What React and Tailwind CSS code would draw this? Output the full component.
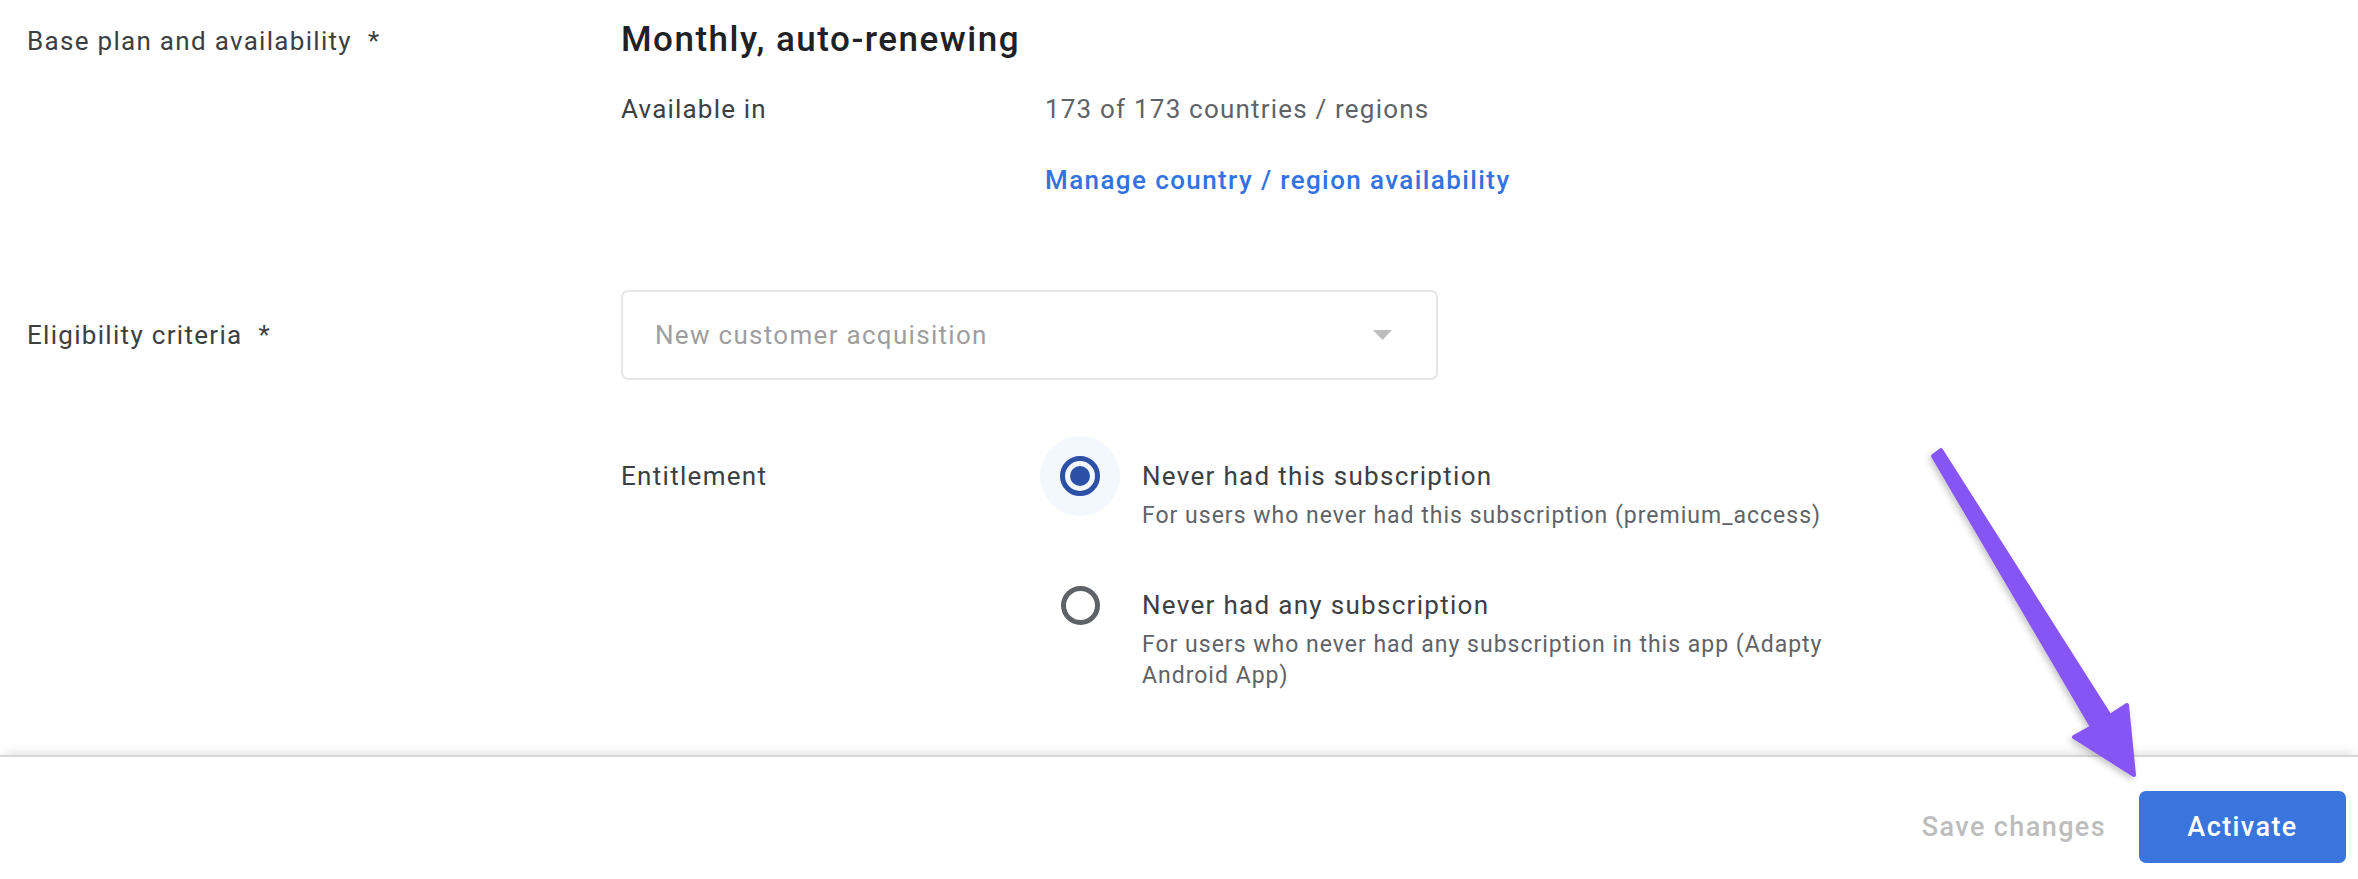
import { useState } from 'react'

const font = { fontFamily: 'Roboto, "Noto Sans", Arial, sans-serif' }

const options = [
  {
    id: 'this',
    title: 'Never had this subscription',
    desc: 'For users who never had this subscription (premium_access)',
  },
  {
    id: 'any',
    title: 'Never had any subscription',
    desc: 'For users who never had any subscription in this app (Adapty Android App)',
  },
]

const Radio = ({ checked }) => (
  <div
    className={
      'w-[80px] h-[80px] shrink-0 rounded-full flex items-center justify-center ' +
      (checked ? 'bg-[#f3f7fe]' : '')
    }
  >
    {checked ? (
      <div className="w-[40px] h-[40px] rounded-full border-[5px] border-[#2b50a5] flex items-center justify-center">
        <div className="w-[20px] h-[20px] rounded-full bg-[#2b50a5]"></div>
      </div>
    ) : (
      <div className="w-[39px] h-[39px] rounded-full border-[5px] border-[#5f6368]"></div>
    )}
  </div>
)

const Arrow = () => (
  <svg
    className="absolute inset-0 pointer-events-none"
    width="2358"
    height="879"
    viewBox="0 0 2358 879"
  >
    <defs>
      <filter id="arrowShadow" x="-20%" y="-20%" width="140%" height="140%">
        <feDropShadow dx="-2" dy="3" stdDeviation="3" floodColor="#000" floodOpacity="0.22" />
      </filter>
    </defs>
    <path
      d="M1933 456 L1941 450 L2110 716 L2127 705 L2134 775 L2074 737 L2092 727 Z"
      fill="#8655f4"
      stroke="#8655f4"
      strokeWidth="4"
      strokeLinejoin="round"
      filter="url(#arrowShadow)"
    />
  </svg>
)

export default function App() {
  const [selected, setSelected] = useState('this')

  return (
    <div className="relative w-full h-[879px] bg-white flex flex-col overflow-hidden" style={font}>
      <div className="flex-1 pl-[27px] pt-[20px]">
        {/* Base plan */}
        <div className="flex items-start">
          <div className="w-[594px] shrink-0 text-[26px] tracking-[1.3px] leading-[40px] text-[#3c4043] pt-[1px]">
            Base plan and availability<span className="ml-[16px]">*</span>
          </div>
          <div className="flex flex-col">
            <h2 className="text-[35px] tracking-[1.5px] leading-[40px] font-medium text-[#202124]">
              Monthly, auto-renewing
            </h2>
            <div className="flex mt-[31px] text-[26px] tracking-[1.2px] leading-[36px]">
              <div className="w-[424px] shrink-0 text-[#3c4043]">Available in</div>
              <div className="text-[#5f6368]">173 of 173 countries / regions</div>
            </div>
            <div className="flex mt-[35px] text-[26px] tracking-[1.4px] leading-[36px]">
              <div className="w-[424px] shrink-0"></div>
              <a className="text-[#3273e1] font-medium cursor-pointer">
                Manage country / region availability
              </a>
            </div>
          </div>
        </div>

        {/* Eligibility */}
        <div className="flex items-center mt-[92px]">
          <div className="w-[594px] shrink-0 text-[26px] tracking-[1.3px] leading-[36px] text-[#3c4043]">
            Eligibility criteria<span className="ml-[16px]">*</span>
          </div>
          <div className="w-[817px] h-[90px] border-2 border-[#e6e6e6] rounded-[7px] flex items-center justify-between pl-[32px] pr-[44px]">
            <span className="text-[26px] tracking-[1.3px] text-[#9e9e9e]">New customer acquisition</span>
            <svg width="19" height="10" viewBox="0 0 19 10">
              <path d="M0 0 L19 0 L9.5 10 Z" fill="#bdbdbd" />
            </svg>
          </div>
        </div>

        {/* Entitlement */}
        <div className="flex items-start mt-[56px]">
          <div className="w-[594px] shrink-0"></div>
          <div className="w-[419px] shrink-0 text-[26px] tracking-[1.3px] leading-[36px] text-[#3c4043] pt-[22px]">
            Entitlement
          </div>
          <div className="flex flex-col gap-[34px]">
            {options.map((o) => (
              <div
                key={o.id}
                className="flex items-start cursor-pointer"
                onClick={() => setSelected(o.id)}
              >
                <Radio checked={selected === o.id} />
                <div className="ml-[22px] w-[710px] pt-[22px]">
                  <div className="text-[26px] tracking-[1.3px] leading-[36px] text-[#3c4043]">{o.title}</div>
                  <div className="mt-[6px] text-[23px] tracking-[1px] leading-[31px] text-[#5f6368]">{o.desc}</div>
                </div>
              </div>
            ))}
          </div>
        </div>
      </div>

      {/* Footer */}
      <div className="h-[124px] shrink-0 border-t-2 border-[#d6d6d6] shadow-[0_-6px_10px_-4px_rgba(0,0,0,0.12)] flex items-start justify-end pt-[34px] pr-[12px] bg-white">
        <button className="h-[72px] px-[6px] text-[27px] tracking-[1.4px] font-medium text-[#bdbdbd] mr-[27px]" disabled>
          Save changes
        </button>
        <button className="h-[72px] w-[207px] rounded-[7px] bg-[#3a74dd] text-[27px] tracking-[1.4px] font-medium text-white">
          Activate
        </button>
      </div>

      <Arrow />
    </div>
  )
}
